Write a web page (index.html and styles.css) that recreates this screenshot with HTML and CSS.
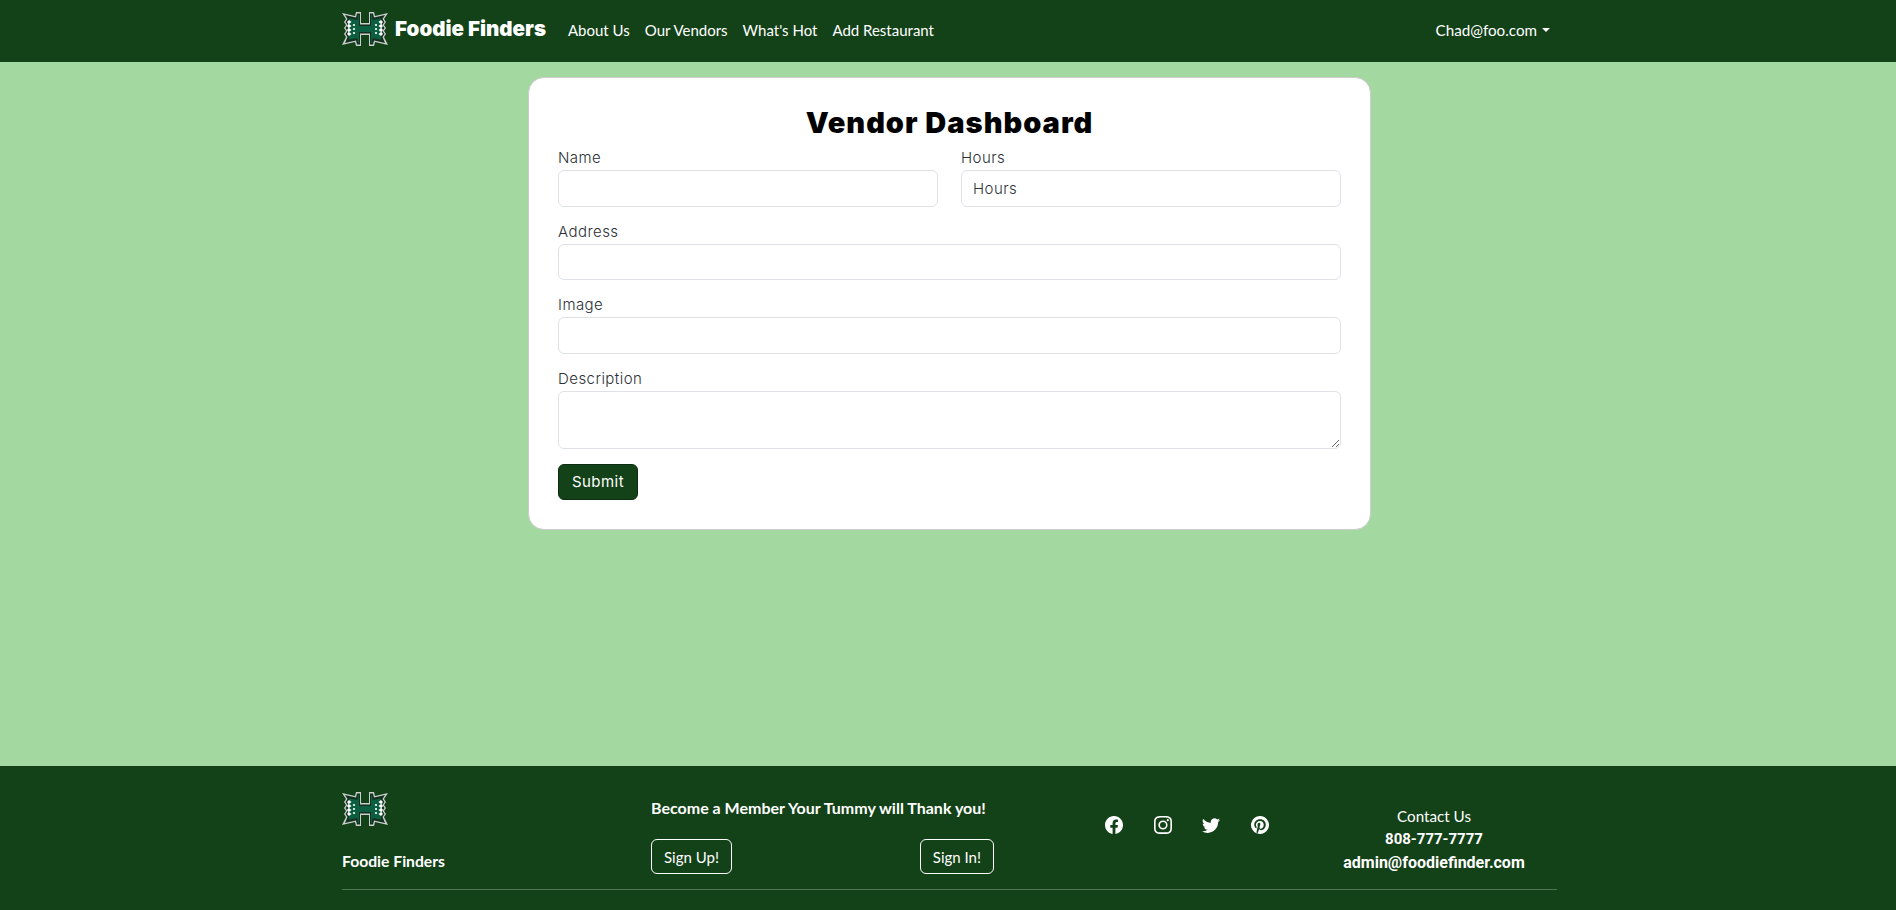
FILE: index.html
```html
<!DOCTYPE html>
<html lang="en">
<head>
<meta charset="utf-8">
<title>Vendor Dashboard</title>
<link rel="stylesheet" href="styles.css">
</head>
<body>
<svg class="defs" width="0" height="0" aria-hidden="true">
  <symbol id="logo" viewBox="0 0 46 34">
    <polygon fill="#c9cfcc" points="0,1 13,4 14,0 19,0 19,11 27,11 27,0 32,0 33,4 46,1 42,7 44,10 42,13 44,16 42,19 44,22 42,25 46,33 33,30 32,34 27,34 27,23 19,23 19,34 14,34 13,30 0,33 4,25 2,22 4,19 2,16 4,13 2,10 4,7"/>
    <polygon fill="#16301f" points="3,3 14,5.500 15,1.500 18,1.500 18,12.500 28,12.500 28,1.500 31,1.500 32,5.500 43,3 40.500,7 42.500,10 40.500,13 42.500,16 40.500,19 42.500,22 40.500,25 43,31 32,28.500 31,32.500 28,32.500 28,21.500 18,21.500 18,32.500 15,32.500 14,28.500 3,31 5.500,25 3.500,22 5.500,19 3.500,16 5.500,13 3.500,10 5.500,7"/>
    <polygon fill="#0b5f40" points="7,6.500 15.500,8 16,3 17,3 17,14 29,14 29,3 30,3 30.500,8 39,6.500 39,27.500 30.500,26 30,31 29,31 29,20 17,20 17,31 16,31 15.500,26 7,27.500"/>
    <polygon fill="#ffffff" points="7,8 9.500,10 7,12 9.500,14 7,16 9.500,18 7,20 9.500,22 7,24 5,22 6.500,20 5,18 6.500,16 5,14 6.500,12 5,10"/>
    <polygon fill="#ffffff" points="39,8 36.500,10 39,12 36.500,14 39,16 36.500,18 39,20 36.500,22 39,24 41,22 39.500,20 41,18 39.500,16 41,14 39.500,12 41,10"/>
    <g fill="#ffffff"><circle cx="12" cy="13" r="1.100"/><circle cx="12" cy="17" r="1.100"/><circle cx="12" cy="21" r="1.100"/><circle cx="34" cy="13" r="1.100"/><circle cx="34" cy="17" r="1.100"/><circle cx="34" cy="21" r="1.100"/></g>
  </symbol>
</svg>

<header class="navbar">
  <div class="nav-inner">
    <a class="brand" href="#">
      <svg class="logo"><use href="#logo"/></svg>
      <span class="brand-text">Foodie Finders</span>
    </a>
    <nav class="nav-links">
      <a href="#">About Us</a>
      <a href="#">Our Vendors</a>
      <a href="#">What's Hot</a>
      <a href="#">Add Restaurant</a>
    </nav>
    <a class="user-menu" href="#">Chad@foo.com<span class="caret"></span></a>
  </div>
</header>

<main class="content">
  <section class="card">
    <h1 class="card-title">Vendor Dashboard</h1>
    <form class="form">
      <div class="form-row">
        <div class="field">
          <label class="label" for="name">Name</label>
          <input class="control" id="name" type="text">
        </div>
        <div class="field">
          <label class="label" for="hours">Hours</label>
          <input class="control" id="hours" type="text" placeholder="Hours">
        </div>
      </div>
      <div class="field">
        <label class="label" for="address">Address</label>
        <input class="control" id="address" type="text">
      </div>
      <div class="field">
        <label class="label" for="image">Image</label>
        <input class="control" id="image" type="text">
      </div>
      <div class="field field-last">
        <label class="label" for="description">Description</label>
        <textarea class="control control-area" id="description"></textarea>
      </div>
      <button class="submit" type="button">Submit</button>
    </form>
  </section>
</main>

<footer class="footer">
  <div class="footer-inner">
    <div class="footer-grid">
      <div class="foot-brand">
        <svg class="logo"><use href="#logo"/></svg>
        <span class="foot-name">Foodie Finders</span>
      </div>
      <div class="foot-member">
        <p class="foot-tag">Become a Member Your Tummy will Thank you!</p>
        <div class="foot-buttons">
          <a class="outline-btn" href="#">Sign Up!</a>
          <a class="outline-btn" href="#">Sign In!</a>
        </div>
      </div>
      <div class="socials">
        <a href="#" aria-label="Facebook"><svg class="social-icon" viewBox="0 0 16 16"><path d="M16 8.049c0-4.446-3.582-8.05-8-8.05C3.58 0-.002 3.603-.002 8.05c0 4.017 2.926 7.347 6.75 7.951v-5.625h-2.03V8.05H6.75V6.275c0-2.017 1.195-3.131 3.022-3.131.876 0 1.791.157 1.791.157v1.98h-1.009c-.993 0-1.303.621-1.303 1.258v1.51h2.218l-.354 2.326H9.25V16c3.824-.604 6.75-3.934 6.75-7.951z"/></svg></a>
        <a href="#" aria-label="Instagram"><svg class="social-icon" viewBox="0 0 16 16"><path d="M8 0C5.829 0 5.556.01 4.703.048 3.85.088 3.269.222 2.76.42a3.917 3.917 0 0 0-1.417.923A3.927 3.927 0 0 0 .42 2.76C.222 3.268.087 3.85.048 4.7.01 5.555 0 5.827 0 8.001c0 2.172.01 2.444.048 3.297.04.852.174 1.433.372 1.942.205.526.478.972.923 1.417.444.445.89.719 1.416.923.51.198 1.09.333 1.942.372C5.555 15.99 5.827 16 8 16s2.444-.01 3.298-.048c.851-.04 1.434-.174 1.943-.372a3.916 3.916 0 0 0 1.416-.923c.445-.445.718-.891.923-1.417.197-.509.332-1.09.372-1.942C15.99 10.445 16 10.173 16 8s-.01-2.445-.048-3.299c-.04-.851-.175-1.433-.372-1.941a3.926 3.926 0 0 0-.923-1.417A3.911 3.911 0 0 0 13.24.42c-.51-.198-1.092-.333-1.943-.372C10.443.01 10.172 0 7.998 0h.003zm-.717 1.442h.718c2.136 0 2.389.007 3.232.046.78.035 1.204.166 1.486.275.373.145.64.319.92.599.28.28.453.546.598.92.11.281.24.705.275 1.485.039.843.047 1.096.047 3.231s-.008 2.389-.047 3.232c-.035.78-.166 1.203-.275 1.485a2.47 2.47 0 0 1-.599.919c-.28.28-.546.453-.92.598-.28.11-.704.24-1.485.276-.843.038-1.096.047-3.232.047s-2.39-.009-3.233-.047c-.78-.036-1.203-.166-1.485-.276a2.478 2.478 0 0 1-.92-.598 2.48 2.48 0 0 1-.6-.92c-.109-.281-.24-.705-.275-1.485-.038-.843-.046-1.096-.046-3.233 0-2.136.008-2.388.046-3.231.036-.78.166-1.204.276-1.486.145-.373.319-.64.599-.92.28-.28.546-.453.92-.598.282-.11.705-.24 1.485-.276.738-.034 1.024-.044 2.515-.045v.002zm4.988 1.328a.96.96 0 1 0 0 1.92.96.96 0 0 0 0-1.92zm-4.27 1.122a4.109 4.109 0 1 0 0 8.217 4.109 4.109 0 0 0 0-8.217zm0 1.441a2.667 2.667 0 1 1 0 5.334 2.667 2.667 0 0 1 0-5.334z"/></svg></a>
        <a href="#" aria-label="Twitter"><svg class="social-icon" viewBox="0 0 16 16"><path d="M5.026 15c6.038 0 9.341-5.003 9.341-9.334 0-.14 0-.282-.006-.422A6.685 6.685 0 0 0 16 3.542a6.658 6.658 0 0 1-1.889.518 3.301 3.301 0 0 0 1.447-1.817 6.533 6.533 0 0 1-2.087.793A3.286 3.286 0 0 0 7.875 6.03a9.325 9.325 0 0 1-6.767-3.429 3.289 3.289 0 0 0 1.018 4.382A3.323 3.323 0 0 1 .64 6.575v.045a3.288 3.288 0 0 0 2.632 3.218 3.203 3.203 0 0 1-.865.115 3.23 3.23 0 0 1-.614-.057 3.283 3.283 0 0 0 3.067 2.277A6.588 6.588 0 0 1 .78 13.58a6.32 6.32 0 0 1-.78-.045A9.344 9.344 0 0 0 5.026 15z"/></svg></a>
        <a href="#" aria-label="Pinterest"><svg class="social-icon" viewBox="0 0 16 16"><path d="M8 0a8 8 0 0 0-2.915 15.452c-.07-.633-.134-1.606.027-2.297.146-.625.938-3.977.938-3.977s-.239-.479-.239-1.187c0-1.113.645-1.943 1.448-1.943.682 0 1.012.512 1.012 1.127 0 .686-.437 1.712-.663 2.663-.188.796.4 1.446 1.185 1.446 1.422 0 2.515-1.5 2.515-3.664 0-1.915-1.377-3.254-3.342-3.254-2.276 0-3.612 1.707-3.612 3.471 0 .688.265 1.425.595 1.826a.24.24 0 0 1 .056.23c-.061.252-.196.796-.222.907-.035.146-.116.177-.268.107-1-.465-1.624-1.926-1.624-3.1 0-2.523 1.834-4.84 5.286-4.84 2.775 0 4.932 1.977 4.932 4.62 0 2.757-1.739 4.976-4.151 4.976-.811 0-1.573-.421-1.834-.919l-.498 1.902c-.181.695-.669 1.566-.995 2.097A8 8 0 1 0 8 0z"/></svg></a>
      </div>
      <div class="contact">
        <span class="contact-title">Contact Us</span>
        <strong class="contact-phone">808-777-7777</strong>
        <strong class="contact-mail">admin@foodiefinder.com</strong>
      </div>
    </div>
    <hr class="foot-rule">
  </div>
</footer>
</body>
</html>
```
FILE: styles.css
```css
* { box-sizing: border-box; }

html, body { height: 100%; }

body {
  margin: 0;
  min-height: 910px;
  display: flex;
  flex-direction: column;
  background: #a3d8a0;
  font-family: "Open Sans", "Noto Sans", sans-serif;
  overflow: hidden;
}

a { color: #fff; text-decoration: none; }

.defs { position: absolute; }

.logo { width: 46px; height: 34px; display: block; flex: none; }

/* Navbar */
.navbar { height: 62px; background: #134118; flex: none; }

.nav-inner {
  width: 1215px;
  height: 100%;
  margin-left: 342px;
  padding-bottom: 3px;
  display: flex;
  align-items: center;
}

.brand { display: flex; align-items: center; gap: 7px; margin-top: -2px; }

.brand-text {
  font-family: Inter, sans-serif;
  font-weight: 900;
  font-size: 20.500px;
  color: #fff;
}

.nav-links {
  display: flex;
  gap: 15px;
  margin-left: 22px;
  font-family: Lato, sans-serif;
  font-size: 15px;
}

.user-menu {
  margin-left: auto;
  margin-right: 7px;
  font-family: Lato, sans-serif;
  font-size: 15.200px;
  display: flex;
  align-items: center;
}

.caret {
  margin-left: 5px;
  border-top: 4px solid #fff;
  border-left: 4px solid transparent;
  border-right: 4px solid transparent;
}

/* Card */
.content { flex: 1; padding-top: 15px; }

.card {
  width: 843px;
  height: 453px;
  margin-left: 528px;
  padding: 27px 29px 0;
  background: #fff;
  border: 1px solid #ccc;
  border-radius: 16px;
}

.card-title {
  margin: 0;
  height: 41px;
  text-align: center;
  font-family: Inter, sans-serif;
  font-weight: 900;
  font-size: 29px;
  letter-spacing: 1px;
  line-height: 36px;
  color: #000;
}

.form { display: flex; flex-direction: column; }

.form-row { display: grid; grid-template-columns: 1fr 1fr; column-gap: 23px; }

.field { display: flex; flex-direction: column; margin-bottom: 13px; }

.field-last { margin-bottom: 15px; }

.label {
  font-family: Inter, sans-serif;
  font-size: 15px;
  font-weight: 300;
  letter-spacing: 0.450px;
  line-height: 24px;
  color: #2b3036;
}

.control {
  display: block;
  width: 100%;
  height: 36.500px;
  padding: 6px 11px;
  border: 1px solid #dee2e6;
  border-radius: 6px;
  font-family: Inter, sans-serif;
  font-size: 15px;
  font-weight: 300;
  letter-spacing: 0.450px;
  color: #212529;
  background: #fff;
}

.control::placeholder { color: #2f343a; opacity: 1; }

.control-area { height: 58px; resize: vertical; }

.submit {
  align-self: flex-start;
  width: 80px;
  height: 36px;
  border: 1px solid #0d2e11;
  border-radius: 6px;
  background: #134118;
  color: #fff;
  font-family: Inter, sans-serif;
  font-size: 15px;
  letter-spacing: 0.450px;
}

/* Footer */
.footer { height: 144px; flex: none; background: #134118; color: #fff; }

.footer-inner { width: 1215px; margin-left: 342px; padding-top: 26px; }

.footer-grid {
  height: 96px;
  display: grid;
  grid-template-columns: 309px 310px 279px 1fr;
  font-family: Lato, sans-serif;
}

.foot-brand { display: flex; flex-direction: column; gap: 25px; }

.foot-name { font-weight: 700; font-size: 15.700px; line-height: 20px; }

.foot-member { width: 343px; }

.foot-tag { margin: 6px 0 0; font-weight: 700; font-size: 16px; line-height: 20px; }

.foot-buttons { display: flex; justify-content: space-between; margin-top: 21px; }

.outline-btn {
  height: 35px;
  padding: 0 12px;
  display: flex;
  align-items: center;
  border: 1px solid #fff;
  border-radius: 6px;
  font-size: 15px;
}

.socials {
  display: flex;
  align-items: flex-start;
  gap: 30.500px;
  padding: 24px 0 0 144px;
}

.social-icon { width: 18px; height: 18px; display: block; fill: #fff; }

.contact {
  display: flex;
  flex-direction: column;
  align-items: center;
  padding: 13px 0 0 71px;
}

.contact-title { font-size: 15.200px; line-height: 23px; }

.contact-phone {
  font-family: Roboto, sans-serif;
  font-size: 15px;
  line-height: 23px;
  font-weight: 700;
}

.contact-mail {
  font-family: Roboto, sans-serif;
  font-size: 16px;
  line-height: 23px;
  font-weight: 700;
}

.foot-rule {
  margin: 1px 0 0;
  border: 0;
  border-top: 1px solid #4f7652;
}
```
